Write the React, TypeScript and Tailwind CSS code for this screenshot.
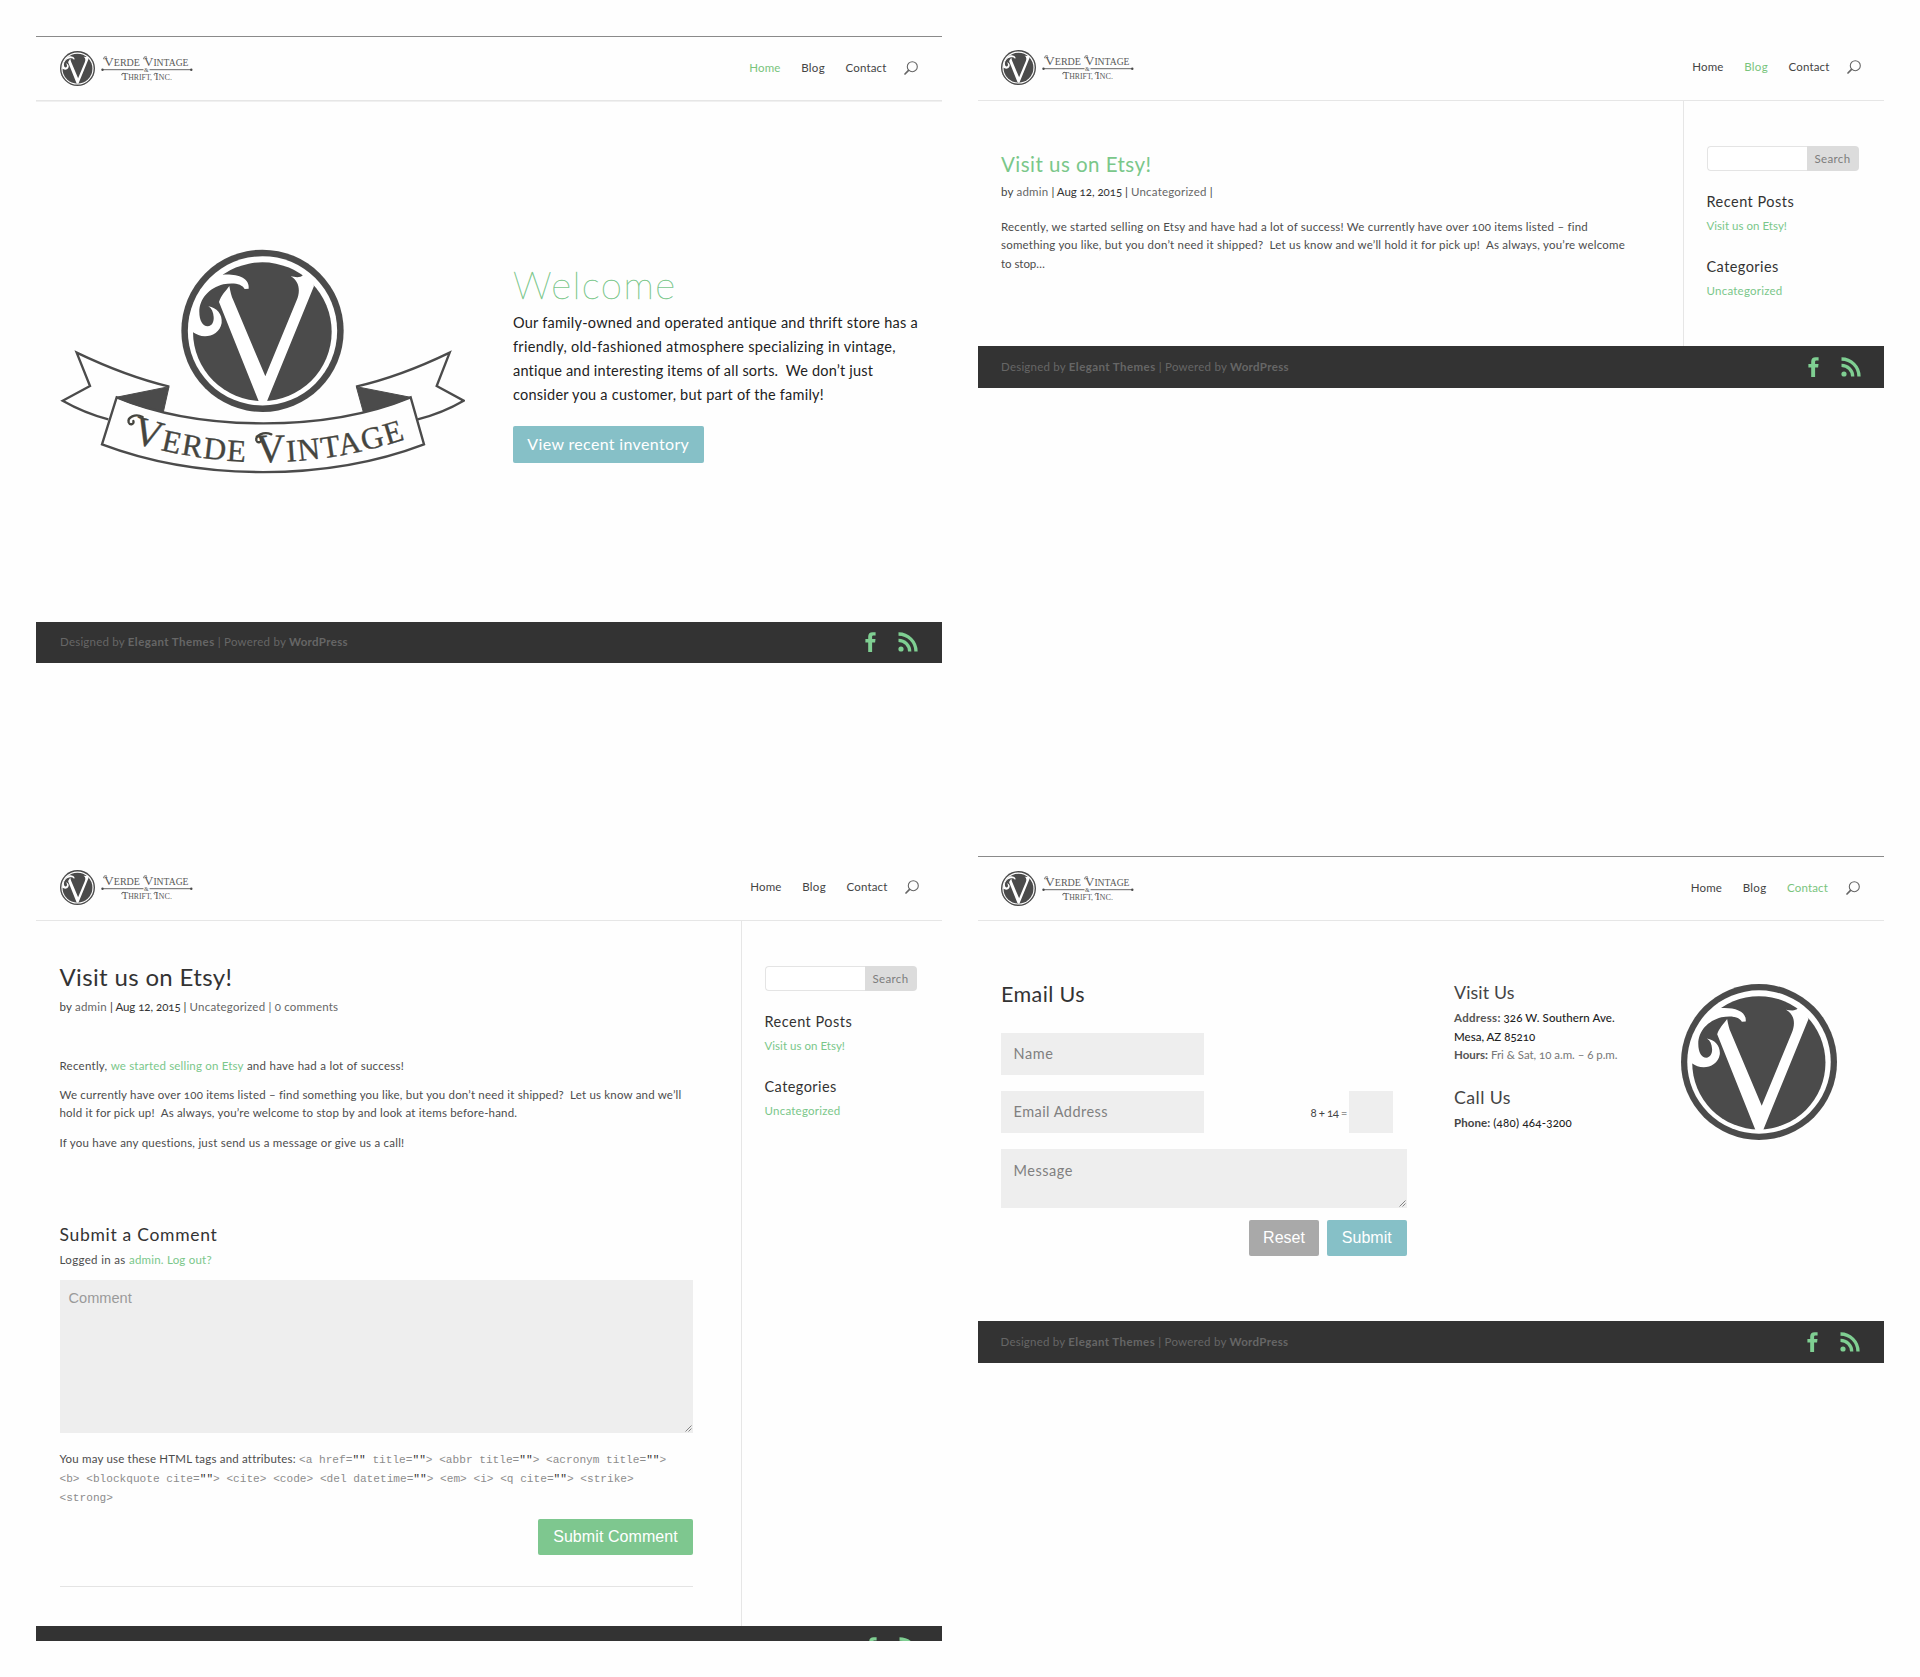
import type { ReactNode } from 'react';

type Page = 'Home' | 'Blog' | 'Contact' | null;

function Emblem({ className }: { className: string }) {
  return (
    <svg className={className} viewBox="424 88 487 487">
      <EmblemShapes />
    </svg>
  );
}

function EmblemShapes() {
  return (
    <g>
      <circle cx="667.5" cy="331.5" r="243.5" fill="#4b4b4b" />
      <circle cx="667.5" cy="331.5" r="224" fill="#fff" />
      <circle cx="667" cy="334" r="208" fill="#4b4b4b" />
      <path
        fill="#fff"
        d="M752 168C766 170 780 174 790 163L812 172L822 197L680 545H657L537 245C543 225 556 214 568 197C571 213 574 228 580 240L676 468L770 240C781 214 780 184 752 168Z"
      />
      <path
        fill="#fff"
        d="M548 163C590 160 630 172 626 205L614 206C606 190 580 186 550 192C508 203 478 235 478 275C478 300 488 318 503 318C517 317 522 303 521 290C520 275 515 264 505 258C530 262 548 282 545 308C541 334 517 348 495 348C480 348 470 343 459 336L452 330A216 216 0 0 1 548 158Z"
      />
    </g>
  );
}

function Banner() {
  return (
    <svg className="h-[227px] w-[405px] shrink-0" viewBox="60 80 1215 681">
      <EmblemShapes />
      <g fill="none" stroke="#4b4b4b" strokeWidth="7">
        <path d="M388 499C300 478 200 440 110 397L150 497L68 541C110 565 160 585 205 597" />
        <path d="M948 499C1040 478 1140 440 1229 397L1190 497L1271 541C1230 565 1180 585 1133 597" />
        <path fill="#4b4b4b" strokeWidth="3" d="M228 531L387 499L370 575C320 565 270 550 228 531Z" />
        <path fill="#4b4b4b" strokeWidth="3" d="M1112 531L949 499L970 575C1020 565 1070 550 1112 531Z" />
        <path d="M230 531L186 672C480 783 860 783 1152 672L1112 531C860 635 480 635 230 531Z" />
      </g>
      <path id="ribbon" fill="none" d="M272 664Q690 794 1110 652" />
      <text fontFamily="Liberation Serif, serif" fill="#45453f" stroke="#45453f" strokeWidth="1" fontSize="94">
        <textPath href="#ribbon" textLength="838">
          <tspan fontSize="122">V</tspan>ERDE <tspan fontSize="122">V</tspan>INTAGE
        </textPath>
      </text>
      <g fill="none" stroke="#45453f" strokeWidth="7" strokeLinecap="round">
        <path d="M308 590C285 578 262 592 266 606C270 616 284 612 280 602" />
        <path d="M694 642C670 632 646 646 649 660C653 670 667 666 663 656" />
      </g>
    </svg>
  );
}

function Logo() {
  return (
    <div className="flex items-center gap-[6px]">
      <Emblem className="size-[35px]" />
      <svg className="h-[30px] w-[92px]" viewBox="0 0 92 30">
        <g fontFamily="Liberation Serif, serif" fill="#5a5a5a">
          <text x="3" y="13.3" fontSize="10" textLength="36" lengthAdjust="spacingAndGlyphs">
            <tspan fontSize="13.5">V</tspan>ERDE
          </text>
          <text x="43" y="13.3" fontSize="10" textLength="44.5" lengthAdjust="spacingAndGlyphs">
            <tspan fontSize="13.5">V</tspan>INTAGE
          </text>
          <text x="43" y="19.3" fontSize="6" textLength="5">&amp;</text>
          <text x="21" y="27.3" fontSize="7.6" textLength="30" lengthAdjust="spacingAndGlyphs">
            <tspan fontSize="10">T</tspan>HRIFT,
          </text>
          <text x="54" y="27.3" fontSize="7.6" textLength="17" lengthAdjust="spacingAndGlyphs">
            <tspan fontSize="10">I</tspan>NC.
          </text>
        </g>
        <g fill="none" stroke="#5a5a5a" strokeWidth="0.9">
          <path d="M6 4.2C3.5 3 1.8 5 3 6.4M46 4.2C43.5 3 41.8 5 43 6.4M23.5 20.6C21.5 19.8 20 21.2 21 22.4M55.5 20.6C53.5 19.8 52.5 21.2 53.5 22.4" />
          <path strokeWidth="1" stroke="#666" d="M2 16.7H42.5M48.5 16.7H90" />
        </g>
        <circle cx="1.5" cy="16.7" r="1.2" fill="#4b4b4b" />
        <circle cx="90.3" cy="16.7" r="1.2" fill="#4b4b4b" />
      </svg>
    </div>
  );
}

function Header({ active, className }: { active: Page; className: string }) {
  const on = 'text-[#79c47c]';
  return (
    <header className={`flex h-[65px] shrink-0 items-center justify-between border-b border-b-[#e6e6e6] ${className}`}>
      <Logo />
      <nav className="flex items-center gap-[20.5px] text-[11.5px] leading-4 text-[#444]">
        <a className={`tracking-[0.18px] ${active === 'Home' ? on : ''}`}>Home</a>
        <a className={`tracking-[0.34px] ${active === 'Blog' ? on : ''}`}>Blog</a>
        <a className={`tracking-[0.16px] ${active === 'Contact' ? on : ''}`}>Contact</a>
        <svg className="-ml-[3px] size-[14px]" viewBox="0 0 14 14" fill="none" stroke="#666" strokeLinecap="round">
          <circle cx="8.3" cy="5.7" r="5" strokeWidth="1.1" />
          <path strokeWidth="1.7" d="M4.3 9.7L1 13" />
        </svg>
      </nav>
    </header>
  );
}

function Footer({ className, credit = true }: { className: string; credit?: boolean }) {
  return (
    <footer className={`flex shrink-0 items-center bg-[#333] ${className}`}>
      {credit && (
        <p className="-mt-px text-[11.5px] leading-4 text-[#666]">
          <span className="tracking-[0.22px]">Designed by </span>
          <b className="tracking-[0.42px]">Elegant Themes</b>
          <span className="tracking-[0.23px]"> | Powered by </span>
          <b className="tracking-[0.33px]">WordPress</b>
        </p>
      )}
      <div className="-mt-px ml-auto flex gap-[22px]">
        <svg className="h-5 w-[11px]" viewBox="0 0 11 20" fill="#7fcf92">
          <path d="M7.1 20H3.2V10.4H.4V7H3.2V4.6C3.2 1.6 4.8.2 7.6.2H10.6V3.5H8.6C7.4 3.5 7.1 4 7.1 5V7H10.5L10.1 10.4H7.1Z" />
        </svg>
        <svg className="h-5 w-5" viewBox="0 0 20 20" fill="none" stroke="#7fcf92" strokeWidth="3.3">
          <circle cx="3" cy="17" r="2.6" fill="#7fcf92" stroke="none" />
          <path d="M0.5 8.3A11.2 11.2 0 0 1 11.7 19.5M0.5 2A17.5 17.5 0 0 1 18 19.5" />
        </svg>
      </div>
    </footer>
  );
}

function Sidebar() {
  return (
    <aside className="pt-[45px] pl-[22.5px] text-[11.5px]">
      <div className="flex h-[25px] w-[152px]">
        <div className="flex-1 rounded-l-sm border border-[#e4e4e4] border-r-0 bg-white" />
        <div className="w-[52px] rounded-r-sm bg-[#dcdcdc] text-center leading-[25px] tracking-[0.35px] text-[#7d7d7d]">
          Search
        </div>
      </div>
      <h4 className="mt-[22.3px] text-[14.5px] leading-[18px] tracking-[0.48px] text-[#333]">Recent Posts</h4>
      <p className="mt-[6px] leading-[18px] tracking-[0.03px] text-[#7ac78a]">Visit us on Etsy!</p>
      <h4 className="mt-[22.7px] text-[14.5px] leading-[18px] tracking-[0.42px] text-[#333]">Categories</h4>
      <p className="mt-[6px] leading-[18px] tracking-[0.23px] text-[#7ac78a]">Uncategorized</p>
    </aside>
  );
}

function ResizeGrip() {
  return (
    <svg className="absolute right-px bottom-px size-[7px]" viewBox="0 0 7 7" stroke="#777" strokeWidth="0.9">
      <path d="M0.5 6.5L6.5 0.5M3.5 6.5L6.5 3.5" />
    </svg>
  );
}

function Button({ className, children }: { className: string; children: ReactNode }) {
  return (
    <div className={`flex h-[36.5px] items-center justify-center rounded-[2px] text-[16px] text-white ${className}`}>{children}</div>
  );
}

function HomePage() {
  return (
    <section className="flex flex-col">
      <Header active="Home" className="border-t border-t-[#8a8a8a] pr-6 pb-px pl-6 shadow-[0_1px_0_#f0f0f0]" />
      <main className="flex h-[520.5px] gap-12 pl-6">
        <div className="pt-[145.5px]">
          <Banner />
        </div>
        <div className="pt-[171px] whitespace-nowrap">
          <h1 className="h-[39px] text-[38.5px] leading-[25px] font-thin tracking-[1.4px] text-[#7ac78a] [-webkit-text-stroke:0.4px_#7ac78a]">
            Welcome
          </h1>
          <p className="text-[14.5px] leading-6 text-[#222]">
            <span className="tracking-[0.24px]">Our family-owned and operated antique and thrift store has a</span>
            <br />
            <span className="tracking-[0.29px]">friendly, old-fashioned atmosphere specializing in vintage,</span>
            <br />
            <span className="tracking-[0.19px]">antique and interesting items of all sorts.&nbsp; We don’t just</span>
            <br />
            <span className="tracking-[0.24px]">consider you a customer, but part of the family!</span>
          </p>
          <Button className="mt-[19px] w-[190.5px] bg-[#86c0c7] tracking-[0.34px]">View recent inventory</Button>
        </div>
      </main>
      <Footer className="h-[41.5px] pr-6 pl-6" />
    </section>
  );
}

function BlogPage() {
  return (
    <section className="flex flex-col">
      <Header active="Blog" className="pr-[23px] pb-[2px] pl-[23px]" />
      <div className="flex h-[245px]">
        <main className="w-[706px] border-r border-[#e6e6e6] pt-[51px] pl-[23px] text-[11.5px] whitespace-nowrap text-[#666]">
          <h2 className="text-[20.5px] leading-[25px] tracking-[0.47px] text-[#7ac78a]">Visit us on Etsy!</h2>
          <p className="mt-[6px] leading-[18px] tracking-[0.2px]">
            <span className="text-[#444]">by</span> admin <span className="tracking-[-0.04px] text-[#333]">| Aug 12, 2015 |</span>{' '}
            Uncategorized <span className="text-[#444]">|</span>
          </p>
          <p className="mt-[17px] leading-[18.33px] text-[#4c4c4c]">
            <span className="tracking-[0.215px]">
              Recently, we started selling on Etsy and have had a lot of success! We currently have over 100 items listed – find
            </span>
            <br />
            <span className="tracking-[0.205px]">
              something you like, but you don’t need it shipped?&nbsp; Let us know and we’ll hold it for pick up!&nbsp; As always, you’re welcome
            </span>
            <br />
            <span className="tracking-[-0.05px]">to stop…</span>
          </p>
        </main>
        <Sidebar />
      </div>
      <Footer className="h-[42px] pr-[23px] pl-[23px]" />
    </section>
  );
}

const TAG_LINES = [
  '<a href="" title=""> <abbr title=""> <acronym title="">',
  '<b> <blockquote cite=""> <cite> <code> <del datetime=""> <em> <i> <q cite=""> <strike>',
  '<strong>',
];

function Code({ text }: { text: string }) {
  const parts = text.split('""');
  return (
    <code className="font-['Liberation_Mono',monospace] text-[11.13px] leading-none text-[#8c8c8c]">
      {parts.map((part, i) => (
        <span key={i}>
          {part}
          {i < parts.length - 1 && <span className="text-[#333]">""</span>}
        </span>
      ))}
    </code>
  );
}

function PostPage() {
  return (
    <section className="flex flex-col overflow-hidden">
      <Header active={null} className="pr-[23px] pb-[2px] pl-6" />
      <div className="flex h-[705px] shrink-0">
        <main className="w-[706px] border-r border-[#e6e6e6] pt-[41px] pl-[23.5px] text-[11.5px] whitespace-nowrap text-[#4c4c4c]">
          <h1 className="text-[24px] leading-[30px] tracking-[0.34px] text-[#333]">Visit us on Etsy!</h1>
          <p className="mt-[6px] leading-[18px] tracking-[0.21px] text-[#666]">
            <span className="text-[#444]">by</span> admin <span className="tracking-[-0.04px] text-[#333]">| Aug 12, 2015 |</span>{' '}
            Uncategorized | 0 comments
          </p>
          <div className="mt-[40.5px] space-y-[11.2px] leading-[18.33px]">
            <p>
              <span className="tracking-[0.26px]">Recently, </span>
              <span className="tracking-[0.18px] text-[#7ac78a]">we started selling on Etsy</span>
              <span className="tracking-[0.27px]"> and have had a lot of success!</span>
            </p>
            <p className="tracking-[0.187px]">
              We currently have over 100 items listed – find something you like, but you don’t need it shipped?&nbsp; Let us know and we’ll
              <br />
              hold it for pick up!&nbsp; As always, you’re welcome to stop by and look at items before-hand.
            </p>
            <p className="tracking-[0.225px]">If you have any questions, just send us a message or give us a call!</p>
          </div>
          <h3 className="mt-[71.5px] text-[17.5px] leading-[22px] tracking-[0.7px] text-[#333]">Submit a Comment</h3>
          <p className="mt-[5px] leading-[18px]">
            <span className="tracking-[0.34px]">Logged in as </span>
            <span className="tracking-[0.22px] text-[#7ac78a]">admin. Log out?</span>
          </p>
          <div className="relative mt-[11.5px] h-[153px] w-[633.5px] bg-[#eee] pt-[8px] pl-[9px] font-['Liberation_Sans',sans-serif] text-[14.6px] leading-5 text-[#9a9a9a]">
            Comment
            <ResizeGrip />
          </div>
          <p className="mt-[15.5px] leading-[19.2px]">
            <span className="tracking-[0.19px]">You may use these HTML tags and attributes: </span>
            <Code text={TAG_LINES[0]} />
            <br />
            <Code text={TAG_LINES[1]} />
            <br />
            <Code text={TAG_LINES[2]} />
          </p>
          <Button className="mt-[12.3px] ml-[478.5px] w-[155px] bg-[#7ec78f] font-['Liberation_Sans',sans-serif] tracking-[0.08px]">
            Submit Comment
          </Button>
          <hr className="mt-[31.3px] w-[633.5px] border-[#e4e4e4]" />
        </main>
        <Sidebar />
      </div>
      <Footer className="h-[42px] pr-[23px] pl-6" credit={false} />
    </section>
  );
}

function ContactPage() {
  const field = 'bg-[#eee] pl-[12.5px] text-[14.5px] text-[#808080]';
  return (
    <section className="flex flex-col">
      <Header active="Contact" className="border-t border-t-[#8a8a8a] pr-[24.5px] pb-px pl-[23px]" />
      <main className="flex h-[400px] pl-[23px] whitespace-nowrap">
        <div className="w-[405.5px] pt-[59.5px]">
          <h2 className="text-[21.5px] leading-[26px] tracking-[0.4px] text-[#333]">Email Us</h2>
          <div className={`mt-[26.7px] h-[42px] w-[203px] leading-[42px] tracking-[0.58px] ${field}`}>Name</div>
          <div className="mt-4 flex items-center">
            <div className={`h-[42px] w-[203px] leading-[42px] tracking-[0.46px] ${field}`}>Email Address</div>
            <div className="mt-px ml-[106.5px] text-[11.5px] tracking-[-0.45px] text-[#444]">
              8 + 14 <span className="text-[#999]">=</span>
            </div>
            <div className="-mt-px ml-auto mr-[13.5px] h-[42px] w-[44px] bg-[#eee]" />
          </div>
          <div className={`relative mt-[16.3px] h-[58.5px] pt-[12px] leading-5 tracking-[0.53px] ${field}`}>
            Message
            <ResizeGrip />
          </div>
          <div className="mt-3 flex justify-end gap-2 font-['Liberation_Sans',sans-serif]">
            <Button className="w-[70px] bg-[#a9a9a9]">Reset</Button>
            <Button className="w-[79.5px] bg-[#86c0c7]">Submit</Button>
          </div>
        </div>
        <div className="ml-[47.5px] w-[227px] pt-[60px] text-[11.5px] leading-[18.33px]">
          <h3 className="text-[17.8px] leading-[22px] tracking-[0.12px] text-[#444]">Visit Us</h3>
          <p className="mt-[6.4px] font-medium text-[#222]">
            <b className="tracking-[0.3px] text-[#555]">Address:</b> <span className="tracking-[0.09px]">326 W. Southern Ave.</span>
            <br />
            Mesa, AZ 85210
            <br />
            <b className="text-[#555]">Hours:</b> <span className="font-normal tracking-[-0.04px] text-[#777]">Fri &amp; Sat, 10 a.m. – 6 p.m.</span>
          </p>
          <h3 className="mt-[22.1px] text-[17.8px] leading-[22px] tracking-[0.42px] text-[#444]">Call Us</h3>
          <p className="mt-[5.5px] font-medium text-[#222]">
            <b className="tracking-[0.1px] text-[#444]">Phone:</b> <span className="tracking-[0.23px]">(480) 464-3200</span>
          </p>
        </div>
        <Emblem className="mt-[63.3px] size-[156px]" />
      </main>
      <Footer className="h-[42px] pr-6 pl-[22.5px]" />
    </section>
  );
}

export default function App() {
  return (
    <div className="grid h-[1677px] w-[1920px] grid-cols-[906px_906px] grid-rows-[820px_785px] gap-x-9 bg-[#fefefe] px-9 pt-9 font-['Lato',sans-serif] oldstyle-nums">
      <HomePage />
      <BlogPage />
      <PostPage />
      <ContactPage />
    </div>
  );
}
